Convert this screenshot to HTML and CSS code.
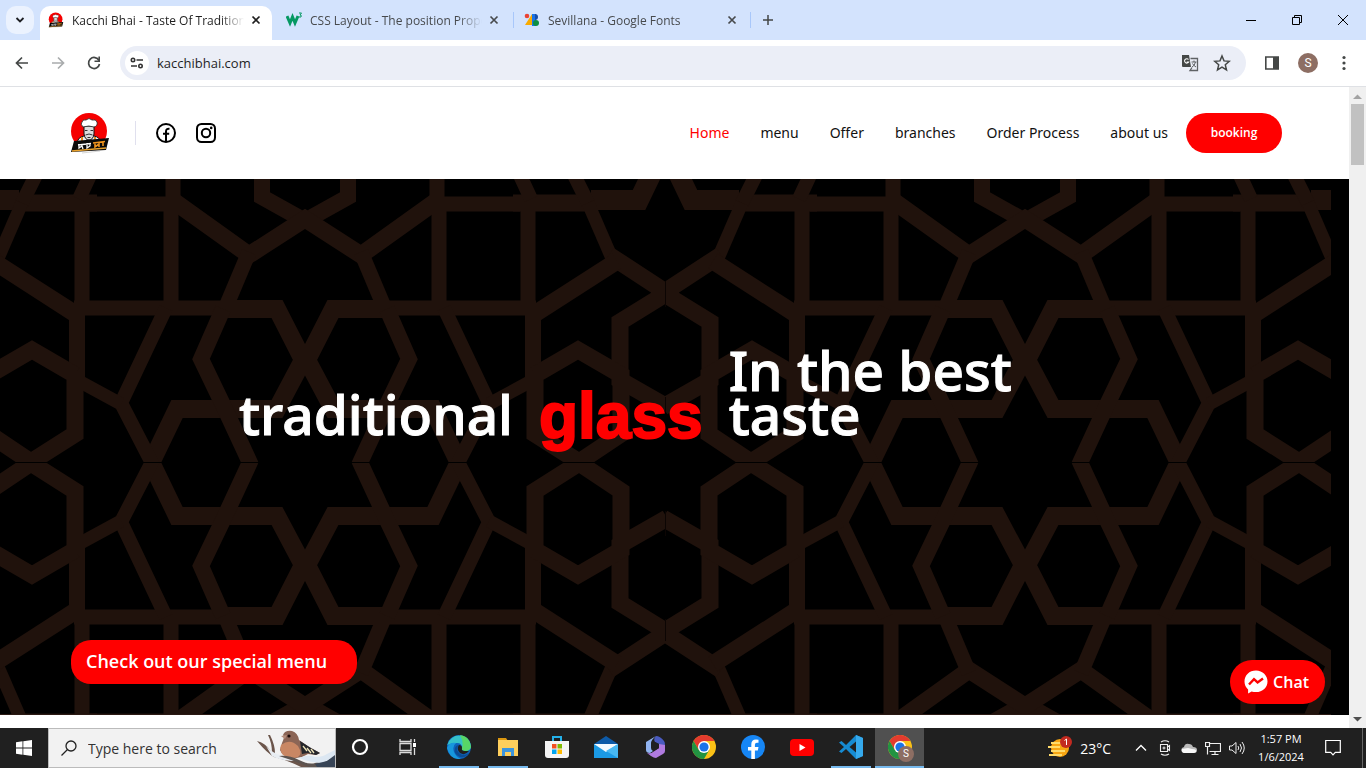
FILE: index.html
```html
<!DOCTYPE html>
<html lang="en">
<head>
<meta charset="utf-8">
<title>Kacchi Bhai - Taste Of Traditional</title>
<link rel="stylesheet" href="styles.css">
</head>
<body>
<svg class="defs" aria-hidden="true">
  <defs>
    <symbol id="close" viewBox="0 0 10 10"><path d="M1.5 1.5l7 7M8.5 1.5l-7 7" stroke="currentColor" stroke-width="1.7"/></symbol>
    <symbol id="chef" viewBox="0 0 40 42">
      <circle cx="19" cy="19" r="18" fill="#f50000"/>
      <path d="M7 31q1-6 7-7h10q6 1 7 7z" fill="#eee" stroke="#111"/>
      <path d="M14 14h10v8q-1 6-5 6t-5-6z" fill="#ddd" stroke="#111"/>
      <path d="M13 15q-3-3-1-5 1-3 4-2 3-3 6 0 4-1 5 2 1 4-3 5-5-2-11 0z" fill="#fff" stroke="#222" stroke-width=".8"/>
      <path d="M15 18.500h2.500M20.500 18.500H23M15.500 23q3.500-2 7 0M17.500 25.500h3" stroke="#333" fill="none"/>
      <path d="M12 25v6M25 25v6" stroke="#e78a20" stroke-width="2"/>
      <path d="M4 29l35-3-3 12-35 2z" fill="#0a0a0a"/>
      <path d="M2 39l34-3" stroke="#e9a22d" stroke-width="1.300"/>
      <path d="M8 33l13-1.500M9 32v4l3-2 1 3M17 31v5l3-2v-3" stroke="#fff" stroke-width="1.300" fill="none"/>
      <path d="M23 31l12-1.500M25 31v4l4-3v3M33 30v4" stroke="#f0941d" stroke-width="1.600" fill="none"/>
      <path d="M12 41l18-2" stroke="#bbb" stroke-width=".6"/>
    </symbol>
    <symbol id="chrome" viewBox="0 0 24 24">
      <circle cx="12" cy="12" r="12" fill="#fbc116"/>
      <path d="M1.600 6A12 12 0 0 1 22.400 6H12L6.800 15z" fill="#e33b2e"/>
      <path d="M1.600 6A12 12 0 0 0 12 24l5.200-9L12 12 6.800 15z" fill="#229342"/>
      <circle cx="12" cy="12" r="6" fill="#fff"/><circle cx="12" cy="12" r="4.600" fill="#1a73e8"/>
    </symbol>
    <clipPath id="quarterClip"><path d="M0 0h360v283H0z"/></clipPath>
    <g id="quarter" clip-path="url(#quarterClip)" fill="none" stroke="#20120c" stroke-width="15" stroke-linejoin="miter">
      <path d="M43-5V18L0 42" stroke-width="16"/>
      <path d="M-6 36L56 76L130 23" stroke-width="17"/>
      <path d="M56 73L80 130"/>
      <path d="M132-5V25H215"/>
      <path d="M134 25V129M223 25V135" />
      <path d="M208 24H290" stroke-width="17"/>
      <path d="M286 21H334L347-6" stroke-width="20"/>
      <path d="M213-8L226 20M267-8L283 24" stroke-width="14"/>
      <path d="M283 24L309 84" stroke-width="13"/>
      <path d="M304 76L362 114L315 143V201L362 228" stroke-width="17"/>
      <path d="M312 82L228 136" stroke-width="17"/>
      <path d="M80 129H231"/>
      <path d="M82 130H28L2 181L28 230H128L154 284" stroke-width="18"/>
      <path d="M82 130L104 180L80 230L54 286" stroke-width="16"/>
      <path d="M139 129L184 224L152 286" stroke-width="14"/>
      <path d="M184 225L230 200" stroke-width="13"/>
      <path d="M228 129V200" stroke-width="16"/>
      <path d="M230 192V255L274 283L316 255V196L273 171L230 196" stroke-width="17"/>
    </g>
    <g id="upper">
      <use href="#quarter" transform="translate(305 0) scale(-1 1)"/>
      <use href="#quarter" transform="translate(305 0)"/>
      <use href="#quarter" transform="translate(1025 0) scale(-1 1)"/>
      <use href="#quarter" transform="translate(1025 0)"/>
    </g>
  </defs>
</svg>

<div class="tabstrip">
  <button class="tab-search" aria-label="Search tabs"><svg width="10" height="8" viewBox="0 0 10 8"><path d="M1.500 2L5 5.500 8.500 2" fill="none" stroke="#1f2024" stroke-width="1.800"/></svg></button>
  <div class="tab tab-active">
    <svg class="favicon"><use href="#chef"/></svg>
    <span class="tab-title">Kacchi Bhai - Taste Of Traditional</span>
    <button class="tab-close" aria-label="Close tab"><svg><use href="#close"/></svg></button>
  </div>
  <div class="tab">
    <svg class="favicon" viewBox="0 0 16 16"><path d="M1 4l3 7 2.500-6L9 11l3-7" fill="none" stroke="#059862" stroke-width="3"/><path d="M13 1h2.500L14 3q2 0 1 2h-2" fill="none" stroke="#059862"/></svg>
    <span class="tab-title">CSS Layout - The position Property</span>
    <button class="tab-close" aria-label="Close tab"><svg><use href="#close"/></svg></button>
  </div>
  <div class="tab tab-ruled">
    <svg class="favicon" viewBox="0 0 16 16"><circle cx="3" cy="4" r="2.300" fill="#ea4335"/><path d="M8 2v11H1z" fill="#f9ab00"/><path d="M8 2h4v12H8z" fill="#1a73e8"/><path d="M11 2a3 3 0 0 1 0 6z" fill="#174ea6"/><circle cx="12" cy="11" r="3" fill="#0d8f43"/></svg>
    <span class="tab-title">Sevillana - Google Fonts</span>
    <button class="tab-close" aria-label="Close tab"><svg><use href="#close"/></svg></button>
  </div>
  <button class="new-tab" aria-label="New tab"><svg width="12" height="12" viewBox="0 0 12 12"><path d="M6 1v10M1 6h10" stroke="#444746" stroke-width="1.500"/></svg></button>
  <div class="window-controls">
    <button aria-label="Minimize"><svg viewBox="0 0 12 12"><path d="M1 6.500h10" stroke="#000"/></svg></button>
    <button aria-label="Restore"><svg viewBox="0 0 12 12"><path d="M1.500 3.500h7v7h-7zM3.500 3.500v-2h7v7h-2" fill="none" stroke="#000"/></svg></button>
    <button aria-label="Close"><svg viewBox="0 0 12 12"><path d="M1 1l10 10M11 1L1 11" stroke="#000"/></svg></button>
  </div>
</div>

<div class="toolbar">
  <button class="tool" aria-label="Back"><svg viewBox="0 0 16 16"><path d="M14 8H3M8 2.500L2.500 8 8 13.500" fill="none" stroke="#444746" stroke-width="1.700"/></svg></button>
  <button class="tool" aria-label="Forward"><svg viewBox="0 0 16 16"><path d="M2 8h11M8 2.500L13.500 8 8 13.500" fill="none" stroke="#a9acad" stroke-width="1.700"/></svg></button>
  <button class="tool" aria-label="Reload"><svg viewBox="0 0 16 16"><path d="M13 5.500A5.500 5.500 0 1 0 13.500 9" fill="none" stroke="#444746" stroke-width="1.700"/><path d="M14 1.500v5.500H8.500V5.400h3.900V1.500z" fill="#444746"/></svg></button>
  <div class="omnibox">
    <button class="site-info" aria-label="Site information"><svg width="14" height="12" viewBox="0 0 14 12"><g fill="none" stroke="#333" stroke-width="1.600"><circle cx="3" cy="3" r="1.700"/><path d="M6.500 3H13M1 9h6"/><circle cx="10.500" cy="9" r="1.700"/></g></svg></button>
    <input class="url" type="text" aria-label="Address" value="kacchibhai.com">
    <button class="omni-icon" aria-label="Translate"><svg width="18" height="18" viewBox="0 0 18 18"><path d="M1 1h7l2 12H2q-1 0-1-1z" fill="#444746"/><path d="M7.500 5.500A2.200 2.200 0 1 0 7.700 8H5.700" fill="none" stroke="#fff" stroke-width="1.100"/><path d="M9.500 4.500h7v12H9l2-3" fill="none" stroke="#5f6265" stroke-width="1.300"/><path d="M10.500 8h5M13 6.500V8M14.500 8q-1 4-3.500 5M11.500 9.500q1 2 3.500 3.500" fill="none" stroke="#5f6265"/></svg></button>
    <button class="omni-icon" aria-label="Bookmark"><svg width="18" height="18" viewBox="0 0 18 18"><path d="M9 2l2 4.900 5.300.4-4 3.500 1.200 5.200L9 13.200 4.500 16l1.200-5.200-4-3.500L7 6.900z" fill="none" stroke="#444746" stroke-width="1.500"/></svg></button>
  </div>
  <button class="tool" aria-label="Side panel"><svg viewBox="0 0 16 16"><path d="M1.800 2h12.400v12H1.800z" fill="none" stroke="#444746" stroke-width="1.600"/><path d="M9 2h5v12H9z" fill="#444746"/></svg></button>
  <button class="tool" aria-label="Profile"><span class="avatar">S</span></button>
  <button class="tool" aria-label="Menu"><svg viewBox="0 0 16 16"><g fill="#444746"><circle cx="8" cy="2.500" r="1.600"/><circle cx="8" cy="8" r="1.600"/><circle cx="8" cy="13.500" r="1.600"/></g></svg></button>
</div>

<div class="viewport">
  <div class="page">
    <header class="site-header">
      <a class="logo" href="#" aria-label="Kacchi Bhai"><svg width="40" height="42"><use href="#chef"/></svg></a>
      <div class="social">
        <a href="#" aria-label="Facebook"><svg width="20" height="20" viewBox="0 0 20 20"><circle cx="10" cy="10" r="9" fill="none" stroke="#000" stroke-width="2"/><path d="M10 18.500V8.500q0-3 3.500-2.700M7 10.700h6.200" fill="none" stroke="#000" stroke-width="2"/></svg></a>
        <a href="#" aria-label="Instagram"><svg width="20" height="20" viewBox="0 0 20 20"><rect x="1" y="1" width="18" height="18" rx="4.500" fill="none" stroke="#000" stroke-width="2"/><circle cx="10" cy="10" r="4.200" fill="none" stroke="#000" stroke-width="2"/><circle cx="15.200" cy="4.900" r="1.300"/></svg></a>
      </div>
      <nav class="nav">
        <a class="current" href="#">Home</a><a href="#">menu</a><a href="#">Offer</a><a href="#">branches</a><a href="#">Order Process</a><a href="#">about us</a>
      </nav>
      <button class="booking">booking</button>
    </header>
    <main class="hero">
      <svg class="lattice" viewBox="0 0 1349 536" preserveAspectRatio="xMinYMin slice" aria-hidden="true">
        <svg width="1331" height="536">
          <use href="#upper"/>
          <use href="#upper" transform="translate(0 567) scale(1 -1)"/>
          <path d="M0 283.500h1331" stroke="#000"/>
          <path d="M665.500 102v26M665.500 218v15M665.500 332v25M665.500 440v22" stroke="#0c0503"/>
          <path d="M0 535.500h1331" stroke="#2a1812"/>
        </svg>
      </svg>
      <h1 class="headline">
        <span>traditional</span>
        <span class="headline-accent">glass</span>
        <span class="headline-end">In the best taste</span>
      </h1>
      <a class="special" href="#">Check out our special menu</a>
    </main>
    <button class="chat"><svg width="24" height="24" viewBox="0 0 24 24"><path d="M12 .5C5.300.5.500 5.300.500 11.500c0 3.300 1.300 6 3.600 8v3.900l3.500-1.900q2 .6 4.400.6c6.700 0 11.500-4.700 11.500-10.600S18.700.5 12 .5z" fill="#fff"/><path d="M5 14.500l5-5.300 3.600 3.200L19 8.500" fill="none" stroke="#f00" stroke-width="2.400"/></svg>Chat</button>
  </div>
  <div class="scrollbar">
    <svg width="9" height="5" viewBox="0 0 9 5"><path d="M0 5l4.500-4.500L9 5z" fill="#a3a3a3"/></svg>
    <div class="thumb"></div>
    <svg width="9" height="5" viewBox="0 0 9 5"><path d="M0 0l4.500 4.500L9 0z" fill="#505050"/></svg>
  </div>
</div>

<footer class="taskbar">
  <button class="start" aria-label="Start"><svg width="16" height="16" viewBox="0 0 16 16"><path d="M0 2.200l6.500-.9v6.300H0zM7.300 1.200L16 0v7.600H7.300zM0 8.400h6.500v6.300L0 13.800zM7.300 8.400H16V16l-8.700-1.200z" fill="#fff"/></svg></button>
  <label class="search">
    <svg width="18" height="18" viewBox="0 0 18 18"><circle cx="11" cy="7" r="5" fill="none" stroke="#222" stroke-width="1.300"/><path d="M7.500 10.500L1.500 16.500" stroke="#222" stroke-width="1.300"/></svg>
    <input type="text" aria-label="Search" placeholder="Type here to search">
    <svg class="bird" width="78" height="38" viewBox="0 0 78 38">
      <path d="M0 12q8 2 13 9l5 5q6 4 22 6l20 6H44Q30 31 17 28 10 24 0 12zM15 24q0-10-4-18l2 0q5 10 5 18z" fill="#6b554b"/>
      <path d="M9 17q8 8 14 9t18 5l-6 1q-14-1-20-5z" fill="#e8edf2"/>
      <path d="M25 14q3-6 1-8 2-5 9-4 6 2 7 9l10 7 11 6-4 2-8-1-6 3-6 1q-14-1-16-8z" fill="#8b6556"/>
      <path d="M24 16q9-7 17 1 5 8 0 11-9 3-15-2-4-5-2-10z" fill="#c98764"/>
      <path d="M43 12l11 7 9 5-4 2-8-2-6 1z" fill="#25272c"/><path d="M46 17l4 5M50 19l4 5M54 20l3 4" stroke="#eee4bb" stroke-width="1.300"/>
      <path d="M24 7l6-1-2 4z" fill="#b38b7a"/><circle cx="32" cy="7" r="1.600" fill="#1b0c0a"/>
      <path d="M22 27q10-1 20 4t16 3l12-5 8-1v10H52q-14-6-30-11z" fill="#5d5450"/>
      <path d="M42 29q9-4 16-1 8 0 12-3l8-4v7l-12 6q-12 0-24-5z" fill="#dce7f2"/><path d="M58 35l12-3 8-6v12H60z" fill="#374456"/>
    </svg>
  </label>
  <button class="task task-plain" aria-label="Cortana"><svg viewBox="0 0 24 24"><circle cx="12" cy="12" r="7" fill="none" stroke="#fff" stroke-width="2.200"/></svg></button>
  <button class="task task-plain" aria-label="Task view"><svg viewBox="0 0 24 24"><path d="M4 8.500h11v7H4zM4 4v2.500h11V4M4 20v-2.500h11V20M18.500 4v3M18.500 13v7" fill="none" stroke="#ddd" stroke-width="1.300"/><path d="M17 8h3v4h-3z" fill="#fff"/></svg></button>
  <button class="task task-open" aria-label="Edge"><svg viewBox="0 0 24 24"><circle cx="12" cy="12" r="12" fill="#0d63bd"/><path d="M.3 10A12 12 0 0 1 24 12q-1 4-6 4-4 0-3-3 0-5-5-5-6 0-9.700 2z" fill="#35c1c9"/><path d="M13 0a12 12 0 0 1 11 12q-1 4-6 4-4 0-3-3 2-6-2-13z" fill="#58d667"/><path d="M0 13q2-6 9-5-4 3-2 9 2 5 7 7Q3 25 0 13z" fill="#1797dd"/><path d="M12 10q-4 4 0 8 4 4 10 0-3 5-9 4-7-3-5-9 1-3 4-3z" fill="#0b4c94"/><path d="M12 10q3 0 3 3-1 3 3 3h4q-4 5-9 2-4-4-1-8z" fill="#202020"/></svg></button>
  <button class="task task-open" aria-label="File Explorer"><svg viewBox="0 0 24 24"><path d="M2 3h8l2 3h-10z" fill="#db9710"/><path d="M2 5h20v16H2z" fill="#ffcf5c"/><path d="M6 13h12v8h-3v-4H9v4H6z" fill="#3d95dd"/></svg></button>
  <button class="task" aria-label="Store"><svg viewBox="0 0 24 24"><path d="M8 7V2h8v5" fill="none" stroke="#24b1ea" stroke-width="2"/><path d="M0 6h24v14q0 3-3 3H3q-3 0-3-3z" fill="#f4f4f4"/><path d="M7 9h4.500v4.500H7z" fill="#f25022"/><path d="M12.500 9H17v4.500h-4.500z" fill="#7fba00"/><path d="M7 14.500h4.500V19H7z" fill="#00a4ef"/><path d="M12.500 14.500H17V19h-4.500z" fill="#ffb900"/></svg></button>
  <button class="task" aria-label="Mail"><svg viewBox="0 0 24 24"><path d="M0 9l12-8 12 8z" fill="#0e5ba8"/><path d="M0 9h24v14H0z" fill="#1b9ae5"/><path d="M0 9h24L12 17z" fill="#f5fbff"/><path d="M24 9v14L12 16z" fill="#48b8f2"/></svg></button>
  <button class="task" aria-label="Microsoft 365"><svg viewBox="0 0 24 24"><path d="M13 1L3 7v8q0 3 4 3l3-2q-2-1-2-3V8q0-3 5-7z" fill="#91b4f1"/><path d="M13 1q4 0 8 5 1 1 1 4v5l-6-4V9l-4-2q-2-3 1-6z" fill="#4a5bc0"/><path d="M22 10v6q0 2-2 3l-7 4q-2 0-5-2l-4-3q4 1 6-1l6-4V9z" fill="#b07be0"/><path d="M12 7l4 2v4l-5 3q-1-1-1-3V9z" fill="#202020"/></svg></button>
  <button class="task" aria-label="Chrome"><svg><use href="#chrome"/></svg></button>
  <button class="task" aria-label="Facebook"><svg viewBox="0 0 24 24"><circle cx="12" cy="12" r="12" fill="#1686f5"/><path d="M10.300 24v-8.500H7V12h3.300V9.300q0-4.800 4.700-4.800l2.500.2v3h-1.600q-2 0-2 2V12h3.600l-.7 3.500h-2.900V24z" fill="#fff"/></svg></button>
  <button class="task" aria-label="YouTube"><svg viewBox="0 0 24 24"><rect y="4" width="24" height="17" rx="4" fill="#f00"/><path d="M9.500 9v7l6-3.500z" fill="#fff"/></svg></button>
  <button class="task task-open" aria-label="Visual Studio Code"><svg viewBox="0 0 24 24"><path d="M17 0l7 3v18l-7 3L7 14l-4.500 4L0 16.500 5 12 0 7.500 2.500 6 7 10z" fill="#168bd2"/><path d="M17 6.500L10.500 12l6.500 5.500z" fill="#202020"/><path d="M17 0l7 3v18l-7 3z" fill="#35a9ec"/></svg></button>
  <button class="task task-current" aria-label="Chrome, open window"><svg><use href="#chrome"/></svg><span class="task-badge">S</span></button>
  <div class="tray">
    <button class="weather"><svg width="26" height="24" viewBox="0 0 26 24"><circle cx="12" cy="12" r="9" fill="#f7a512"/><path d="M3 7h12M0 11h12M3 15h14M1 19h13" stroke="#ffdb69" stroke-width="2"/><circle cx="18" cy="6" r="6" fill="#c22a20"/><path d="M16.500 4.500l2-1.500v6" fill="none" stroke="#fff"/></svg>23°C</button>
    <button class="tray-icon" aria-label="Show hidden icons"><svg viewBox="0 0 16 16"><path d="M3 10.500l5-5 5 5" fill="none" stroke="#fff" stroke-width="1.300"/></svg></button>
    <button class="tray-icon" aria-label="Meet now"><svg viewBox="0 0 16 16"><path d="M3.500 4.500h7v7h-7zM10.500 7l2-1.500v5l-2-1.500M4 2q4-2.500 8 0M4 14q4 2.500 8 0" fill="none" stroke="#eee" stroke-width="1.100"/><circle cx="7" cy="8" r="1" fill="none" stroke="#eee"/></svg></button>
    <button class="tray-icon" aria-label="OneDrive"><svg viewBox="0 0 16 16"><path d="M1 12q-2-4 2-5 1-4 5-3 3 0 4 3 4 0 4 3t-3 3H3z" fill="#b9b9b9"/><path d="M3 13q-3-1-2-4l6-1 4 1q5 0 4 3l-2 1z" fill="#f8f8f8"/></svg></button>
    <button class="tray-icon" aria-label="Network"><svg viewBox="0 0 16 16"><path d="M5 3.500h10.500v8H4.500M10 11.500v3M6.500 14.500h7M.500 2.500h4v4h-4zM2.500 6.500v8" fill="none" stroke="#eee" stroke-width="1.200"/></svg></button>
    <button class="tray-icon" aria-label="Volume"><svg viewBox="0 0 16 16"><path d="M.5 6v4H3l4 3.500v-11L3 6zM9 6q1.500 2 0 4M11 4q3 4 0 8M13 2q4.500 6 0 12" fill="none" stroke="#eee"/></svg></button>
    <div class="clock"><span>1:57 PM</span><span>1/6/2024</span></div>
    <button class="notify" aria-label="Notifications"><svg width="16" height="18" viewBox="0 0 16 18"><path d="M.7 1.500h14.600v11.800h-5L8 15.800l-2.300-2.500h-5z" fill="none" stroke="#fff" stroke-width="1.200"/></svg></button>
  </div>
</footer>
</body>
</html>
```
FILE: styles.css
```css
* { box-sizing: border-box; }
body {
  margin: 0;
  height: 100vh;
  display: flex;
  flex-direction: column;
  overflow: hidden;
  font-family: "Noto Sans", "Open Sans", sans-serif;
  background: #fff;
}
button, input { font: inherit; color: inherit; border: 0; padding: 0; background: none; }
button { display: flex; align-items: center; justify-content: center; flex: none; }
a { color: inherit; text-decoration: none; }
svg { display: block; flex: none; }
.defs { position: absolute; width: 0; height: 0; }

/* Tabs */
.tabstrip { display: flex; height: 40px; flex: none; background: #d3e3fd; padding-left: 6px; align-items: center; }
.tab-search { width: 28px; height: 28px; border-radius: 10px; background: #ebf2fe; margin-right: 6px; }
.tab { display: flex; align-items: center; align-self: flex-end; width: 238px; height: 34px; padding: 0 18px 6px 8px; font-family: "Open Sans", sans-serif; font-size: 12px; color: #474a4d; }
.tab-active { width: 232px; margin-right: 6px; padding-right: 12px; background: #fff; border-radius: 10px 10px 0 0; color: #1f1f1f; }
.tab .favicon { width: 16px; height: 16px; margin-right: 8px; }
.tab-title { flex: 1; overflow: hidden; white-space: nowrap; mask-image: linear-gradient(to right, #000 148px, transparent 172px); }
.tab-close { width: 8px; margin-left: 8px; }
.tab-close svg { width: 10px; height: 10px; }
.tab-ruled { width: 241px; margin-left: -5px; padding: 0 16px 6px 13px; background: linear-gradient(#a8c7fa, #a8c7fa) left 2px top 6px / 1px 16px no-repeat, linear-gradient(#a8c7fa, #a8c7fa) right 1px top 6px / 1px 16px no-repeat; }
.new-tab { width: 28px; height: 28px; margin-left: 2px; }
.window-controls { display: flex; margin-left: auto; }
.window-controls button { width: 46px; height: 40px; }
.window-controls svg { width: 12px; height: 12px; }

/* Toolbar */
.toolbar { display: flex; align-items: center; height: 47px; flex: none; padding: 0 4px; border-bottom: 1px solid #dfe1e5; }
.tool { width: 36px; height: 36px; }
.tool svg { width: 16px; height: 16px; }
.omnibox { display: flex; align-items: center; flex: 1; height: 34px; margin: 0 8px; padding: 0 8px 0 5px; border-radius: 17px; background: #ebeef7; }
.site-info { width: 24px; height: 24px; border-radius: 50%; background: #fff; }
.url { flex: 1; min-width: 0; margin-left: 8px; font-family: "Open Sans", sans-serif; font-size: 13px; color: #1f1f1f; }
.omni-icon { width: 32px; height: 32px; }
.avatar { width: 20px; height: 20px; border-radius: 50%; background: #8d6e63; color: #fff; font: 12px/20px Roboto, sans-serif; text-align: center; }

/* Web page */
.viewport { display: flex; flex: 1; min-height: 0; }
.page { position: relative; display: flex; flex-direction: column; flex: 1; min-width: 0; }
.scrollbar { display: flex; flex-direction: column; align-items: center; width: 17px; flex: none; background: #f0f0f0; padding: 7px 2px 6px; }
.thumb { width: 13px; height: 61px; background: #c1c1c1; margin: 5px 0 auto; }
.site-header { display: flex; align-items: center; height: 92px; flex: none; padding: 0 67px 0 70px; color: #111; }
.social { display: flex; align-items: center; gap: 20px; height: 24px; margin-left: 25px; padding-left: 20px; border-left: 1px solid #e0e0ee; }
.nav { display: flex; gap: 31px; margin-left: auto; padding-bottom: 2px; font-size: 14px; white-space: nowrap; }
.current { color: #f00; }
.booking { width: 96px; height: 40px; margin-left: 18px; padding-bottom: 2px; border-radius: 20px; background: #f00; color: #fff; font-family: "Open Sans", sans-serif; font-size: 12px; font-weight: 600; }
.hero { position: relative; display: flex; flex-direction: column; flex: 1; margin-bottom: 13px; padding: 169px 71px 31px; background: #000; overflow: hidden; }
.lattice { position: absolute; inset: 0; width: 100%; height: 100%; }
.headline { position: relative; display: flex; align-items: flex-end; gap: 26px; width: 100%; max-width: 871px; margin: 0 auto; color: #fff; font-size: 55px; line-height: 44px; font-weight: 500; -webkit-text-stroke: 1px #fff; }
.headline-accent { color: #f00; font-family: "Liberation Sans", sans-serif; font-weight: 700; font-size: 64px; line-height: 40px; -webkit-text-stroke: 2px #f00; }
.headline-end { flex: 1; max-width: 370px; }
.special { position: relative; align-self: flex-start; margin-top: auto; padding: 0 30px 2px 15px; border-radius: 20px; background: #f00; color: #fff; font-family: "Open Sans", sans-serif; font-size: 18px; line-height: 42px; font-weight: 600; }
.chat { position: absolute; right: 24px; bottom: 24px; gap: 5px; height: 44px; padding: 0 16px 0 14px; border-radius: 22px; background: #f00; color: #fff; font-family: "Open Sans", sans-serif; font-size: 16px; font-weight: 600; }

/* Taskbar */
.taskbar { display: flex; height: 40px; flex: none; background: #202020; color: #fff; }
.start { width: 48px; }
.search { display: flex; align-items: center; width: 288px; padding-left: 11px; background: #f2f2f2; border: 1px solid #bbb; color: #333; }
.search input { flex: 1; min-width: 0; margin-left: 10px; font-family: "Open Sans", sans-serif; font-size: 14px; }
.search input::placeholder { color: #333; opacity: 1; }
.task { position: relative; width: 49px; border-bottom: 2px solid transparent; }
.task svg { width: 24px; height: 24px; }
.task-plain { width: 48px; }
.task-plain + .task-open { margin-left: 2px; }
.task-open { background: linear-gradient(#76b9ed, #76b9ed) center bottom / 40px 2px no-repeat border-box; }
.task-current { background: #505050; border-bottom-color: #76b9ed; }
.task-badge { position: absolute; right: 10px; bottom: 4px; width: 16px; height: 16px; border-radius: 50%; background: #8d6e63; font: 10px/16px Roboto, sans-serif; }
.tray { display: flex; align-items: center; margin-left: auto; padding-right: 21px; border-right: 1px solid #666; margin-right: 3px; font-family: "Open Sans", sans-serif; }
.weather { gap: 6px; margin-right: 18px; font-size: 14px; }
.tray-icon { width: 24px; height: 40px; }
.tray-icon svg { width: 16px; height: 16px; }
.clock { display: flex; flex-direction: column; align-items: center; width: 64px; font-size: 11px; line-height: 18px; }
.notify { margin-left: 12px; }
```
